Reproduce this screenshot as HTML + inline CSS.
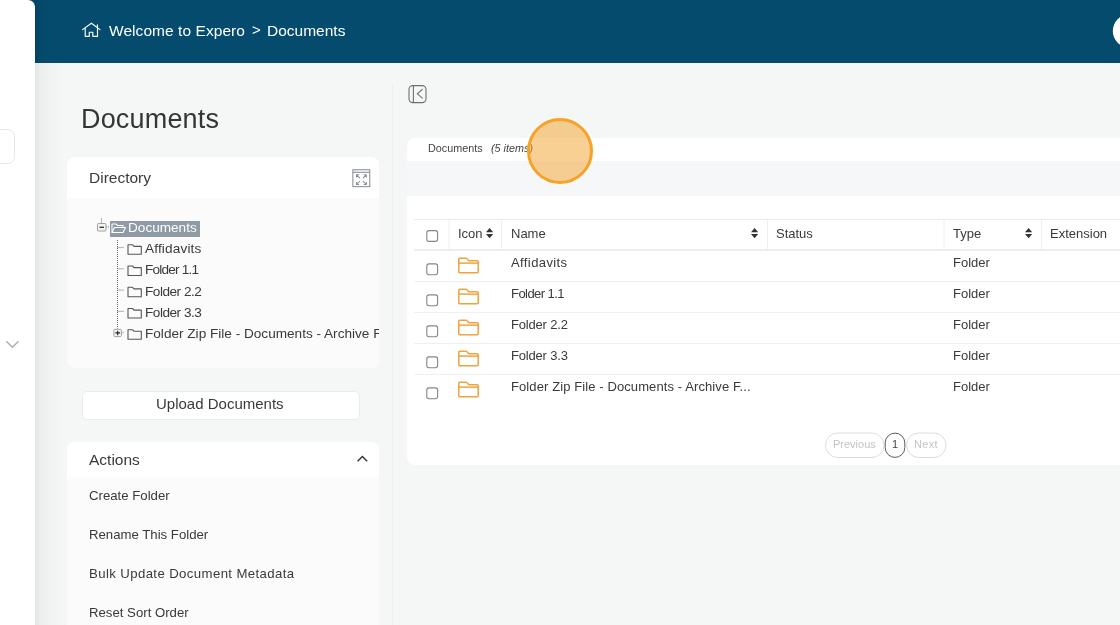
<!DOCTYPE html>
<html><head><meta charset="utf-8">
<style>
*{margin:0;padding:0;box-sizing:border-box}
html,body{width:1120px;height:625px;overflow:hidden;background:#fff;font-family:"Liberation Sans",sans-serif;color:#3a3a3a}
.a{position:absolute}
.t{position:absolute;line-height:1;white-space:nowrap;will-change:transform}
#hdr{left:0;top:0;width:1120px;height:63px;background:#044b6e}
#main{left:35px;top:63px;width:1085px;height:562px;background:#f5f7f7}
#shadow{left:35px;top:63px;width:30px;height:562px;background:linear-gradient(to right,#e4e4e4 0px,#eceeee 5px,#f1f3f3 14px,#f5f7f7 30px)}
#side{left:0;top:0;width:35px;height:625px;background:#fff;border-top-right-radius:7px}
.card{position:absolute;background:#fbfbfb;border-radius:8px;overflow:hidden}
.card .hd{position:absolute;left:0;top:0;right:0;background:#fff}
svg{position:absolute;overflow:visible}
</style></head><body>
<div class="a" id="hdr"></div>
<div class="a" id="main"></div>
<div class="a" id="shadow"></div>
<div class="a" style="left:35px;top:0;width:14px;height:63px;background:linear-gradient(to right,rgba(0,0,0,0.13),rgba(0,0,0,0.04) 5px,rgba(0,0,0,0) 14px)"></div>
<div class="a" id="side"></div>

<!-- header content -->
<svg style="left:0;top:0" width="1120" height="63">
  <g fill="none" stroke="#fff" stroke-width="1.15" stroke-linejoin="round" stroke-linecap="round">
    <path d="M82.6 29.6 L91.4 23.2 L100 29.6"/>
    <path d="M97.4 24.8 V27.2"/>
    <path d="M85.2 28.1 V36.3 H89.3 V32.2 H92.8 V36.3 H97.5 V28.1"/>
  </g>
  <circle cx="1129.3" cy="31" r="16.5" fill="#fff"/>
</svg>
<div class="t" style="left:109px;top:22.6px;font-size:15.5px;letter-spacing:0.06px;color:#fff">Welcome to Expero</div>
<div class="t" style="left:251.6px;top:21.9px;font-size:15px;color:#fff">&gt;</div>
<div class="t" style="left:266.5px;top:22.6px;font-size:15.5px;color:#fff">Documents</div>

<!-- left sidebar bits -->
<div class="a" style="left:-20px;top:129px;width:34.5px;height:35.4px;border:1px solid #e6e8ea;border-radius:7px;background:#fff"></div>
<svg style="left:0;top:0" width="35" height="625">
  <path d="M6.3 341.3 L12.4 347.2 L18.5 341.3" fill="none" stroke="#a7aeb2" stroke-width="1.4"/>
</svg>

<!-- title -->
<div class="t" style="left:81px;top:105.6px;font-size:27px;letter-spacing:0.18px;color:#353535">Documents</div>

<!-- directory card -->
<div class="card" style="left:67.4px;top:157px;width:311.6px;height:211.4px">
  <div class="hd" style="height:41px"></div>
</div>
<div class="t" style="left:89px;top:169.9px;font-size:15.5px;color:#3a3a3a">Directory</div>

<div class="card" style="left:81.8px;top:391.2px;width:278.4px;height:29.3px;background:#fff;border:1px solid #e9ebec;border-radius:5px"></div>
<div class="t" style="left:156px;top:396.3px;font-size:15px;color:#3a3a3a">Upload Documents</div>

<!-- actions card -->
<div class="card" style="left:67.4px;top:441.8px;width:311.6px;height:200px">
  <div class="hd" style="height:35.5px"></div>
</div>
<div class="t" style="left:89px;top:452px;font-size:15.5px">Actions</div>
<div class="t" style="left:89px;top:488.9px;font-size:13.2px">Create Folder</div>
<div class="t" style="left:89px;top:527.9px;font-size:13.2px">Rename This Folder</div>
<div class="t" style="left:89px;top:566.9px;font-size:13.2px;letter-spacing:0.39px">Bulk Update Document Metadata</div>
<div class="t" style="left:89px;top:605.9px;font-size:13.2px">Reset Sort Order</div>

<!-- divider -->
<div class="a" style="left:392px;top:84px;width:1px;height:541px;background:#eceef1"></div>

<!-- right panel card -->
<div class="card" style="left:407px;top:138px;width:760px;height:326.5px;background:#fff">
  <div class="a" style="left:0;top:22.5px;width:760px;height:35px;background:#f5f7f8"></div>
</div>
<div class="t" style="left:428px;top:143.3px;font-size:10.8px;color:#444">Documents</div>
<div class="t" style="left:490.5px;top:143.3px;font-size:10.8px;color:#444;font-style:italic">(5 items)</div>

<!-- table header -->
<div class="a" style="left:414px;top:219px;width:706px;height:1px;background:#e9ebed"></div>
<div class="a" style="left:414px;top:249.3px;width:706px;height:1.6px;background:#ebedef"></div>
<div class="t" style="left:458px;top:226.5px;font-size:13px">Icon</div>
<div class="t" style="left:511px;top:226.5px;font-size:13px">Name</div>
<div class="t" style="left:776px;top:226.5px;font-size:13px">Status</div>
<div class="t" style="left:953px;top:226.5px;font-size:13px">Type</div>
<div class="t" style="left:1050px;top:226.5px;font-size:13px">Extension</div>

<div class="t" style="left:511px;top:256px;font-size:13px;letter-spacing:0.4px">Affidavits</div>
<div class="t" style="left:511px;top:286.8px;font-size:13px;letter-spacing:-0.55px">Folder 1.1</div>
<div class="t" style="left:511px;top:317.6px;font-size:13px;letter-spacing:-0.18px">Folder 2.2</div>
<div class="t" style="left:511px;top:348.9px;font-size:13px;letter-spacing:-0.18px">Folder 3.3</div>
<div class="t" style="left:511px;top:379.7px;font-size:13px;letter-spacing:0.1px">Folder Zip File - Documents - Archive F...</div>
<div class="t" style="left:953px;top:256px;font-size:13px">Folder</div>
<div class="t" style="left:953px;top:286.8px;font-size:13px">Folder</div>
<div class="t" style="left:953px;top:317.6px;font-size:13px">Folder</div>
<div class="t" style="left:953px;top:348.9px;font-size:13px">Folder</div>
<div class="t" style="left:953px;top:379.7px;font-size:13px">Folder</div>

<!-- tree -->
<div class="a" style="left:110px;top:221px;width:90px;height:16px;background:#8e9aa4"></div>
<div class="t" style="left:128px;top:221px;font-size:13.6px;color:#fff">Documents</div>
<div class="t" style="left:144.8px;top:241.58px;font-size:13.6px;letter-spacing:0.16px;color:#3a3a3a">Affidavits</div>
<div class="t" style="left:144.8px;top:262.78px;font-size:13.6px;letter-spacing:-0.8px;color:#3a3a3a">Folder 1.1</div>
<div class="t" style="left:144.8px;top:284.6px;font-size:13.6px;letter-spacing:-0.49px;color:#3a3a3a">Folder 2.2</div>
<div class="t" style="left:144.8px;top:305.8px;font-size:13.6px;letter-spacing:-0.49px;color:#3a3a3a">Folder 3.3</div>
<div class="t" style="left:144.8px;top:322px;height:20px;width:233.5px;overflow:hidden;padding-top:5.1px;font-size:13.6px;color:#3a3a3a">Folder Zip File - Documents - Archive Folder</div>
<svg style="left:0;top:0" width="400" height="400">
<g fill="none" stroke="#6a6a6a" stroke-width="1" stroke-dasharray="1 1">
<path d="M101.5 218.5 V223"/><path d="M106 227 H110"/>
<path d="M117.5 240 V328.5"/>
<path d="M117.5 247.6 H124"/>
<path d="M117.5 268.8 H124"/>
<path d="M117.5 290.1 H124"/>
<path d="M117.5 311.3 H124"/>
<path d="M121.5 332.7 H124"/>
</g>
<rect x="97.5" y="223.5" width="8.5" height="7.5" rx="1" fill="#f4f4f4" stroke="#a0a0a0" stroke-width="1"/>
<path d="M99.5 227.3 H104" stroke="#333" stroke-width="1.3"/>
<g fill="none" stroke="#fff" stroke-width="1.1" stroke-linejoin="round"><path d="M112 232.5 V224 H116 L117.5 225.5 H123 V227.5"/><path d="M112 232.5 L114.5 227.5 H125.5 L123 232.5 Z"/></g>
<path d="M128 254.3 V244.8 H132.5 L134 246.4 H141.3 V254.3 Z" fill="none" stroke="#555" stroke-width="1.1" stroke-linejoin="round"/>
<path d="M128 275.5 V266.0 H132.5 L134 267.6 H141.3 V275.5 Z" fill="none" stroke="#555" stroke-width="1.1" stroke-linejoin="round"/>
<path d="M128 296.8 V287.3 H132.5 L134 288.9 H141.3 V296.8 Z" fill="none" stroke="#555" stroke-width="1.1" stroke-linejoin="round"/>
<path d="M128 318.0 V308.5 H132.5 L134 310.1 H141.3 V318.0 Z" fill="none" stroke="#555" stroke-width="1.1" stroke-linejoin="round"/>
<path d="M128 339.2 V329.7 H132.5 L134 331.3 H141.3 V339.2 Z" fill="none" stroke="#555" stroke-width="1.1" stroke-linejoin="round"/>
<rect x="113.9" y="329.3" width="7.5" height="7.3" rx="1" fill="#f4f4f4" stroke="#a0a0a0" stroke-width="1"/>
<path d="M115.4 332.9 H120 M117.7 330.7 V335.2" stroke="#222" stroke-width="1.1"/>
</svg>
<!-- table -->
<svg style="left:0;top:0" width="1120" height="625">
<path d="M414 281.5 H1120" stroke="#eef0f1" stroke-width="1"/>
<path d="M414 312.5 H1120" stroke="#eef0f1" stroke-width="1"/>
<path d="M414 343.5 H1120" stroke="#eef0f1" stroke-width="1"/>
<path d="M414 374.5 H1120" stroke="#eef0f1" stroke-width="1"/>
<path d="M449.0 220 V249" stroke="#eceef0" stroke-width="1"/>
<path d="M501.5 220 V249" stroke="#eceef0" stroke-width="1"/>
<path d="M767.5 220 V249" stroke="#eceef0" stroke-width="1"/>
<path d="M944.0 220 V249" stroke="#eceef0" stroke-width="1"/>
<path d="M1041.5 220 V249" stroke="#eceef0" stroke-width="1"/>
<rect x="426.8" y="230.6" width="10.8" height="10.8" rx="2.2" fill="#fff" stroke="#858585" stroke-width="1.1"/>
<rect x="426.8" y="263.9" width="10.8" height="10.8" rx="2.2" fill="#fff" stroke="#858585" stroke-width="1.1"/>
<rect x="426.8" y="294.9" width="10.8" height="10.8" rx="2.2" fill="#fff" stroke="#858585" stroke-width="1.1"/>
<rect x="426.8" y="325.9" width="10.8" height="10.8" rx="2.2" fill="#fff" stroke="#858585" stroke-width="1.1"/>
<rect x="426.8" y="356.9" width="10.8" height="10.8" rx="2.2" fill="#fff" stroke="#858585" stroke-width="1.1"/>
<rect x="426.8" y="387.9" width="10.8" height="10.8" rx="2.2" fill="#fff" stroke="#858585" stroke-width="1.1"/>
<g transform="translate(458,257.4)" fill="none" stroke="#f0a23c" stroke-width="1.5" stroke-linejoin="round"><path d="M0.8 14.3 V1.8 Q0.8 0.8 1.8 0.8 H8 Q8.6 0.8 9 1.3 L10.6 3 Q11 3.4 11.6 3.4 H19.2 Q20.2 3.4 20.2 4.4 V14.3 Q20.2 15.3 19.2 15.3 H1.8 Q0.8 15.3 0.8 14.3 Z"/><path d="M0.8 5.7 H20.2"/></g>
<g transform="translate(458,288.4)" fill="none" stroke="#f0a23c" stroke-width="1.5" stroke-linejoin="round"><path d="M0.8 14.3 V1.8 Q0.8 0.8 1.8 0.8 H8 Q8.6 0.8 9 1.3 L10.6 3 Q11 3.4 11.6 3.4 H19.2 Q20.2 3.4 20.2 4.4 V14.3 Q20.2 15.3 19.2 15.3 H1.8 Q0.8 15.3 0.8 14.3 Z"/><path d="M0.8 5.7 H20.2"/></g>
<g transform="translate(458,319.4)" fill="none" stroke="#f0a23c" stroke-width="1.5" stroke-linejoin="round"><path d="M0.8 14.3 V1.8 Q0.8 0.8 1.8 0.8 H8 Q8.6 0.8 9 1.3 L10.6 3 Q11 3.4 11.6 3.4 H19.2 Q20.2 3.4 20.2 4.4 V14.3 Q20.2 15.3 19.2 15.3 H1.8 Q0.8 15.3 0.8 14.3 Z"/><path d="M0.8 5.7 H20.2"/></g>
<g transform="translate(458,350.4)" fill="none" stroke="#f0a23c" stroke-width="1.5" stroke-linejoin="round"><path d="M0.8 14.3 V1.8 Q0.8 0.8 1.8 0.8 H8 Q8.6 0.8 9 1.3 L10.6 3 Q11 3.4 11.6 3.4 H19.2 Q20.2 3.4 20.2 4.4 V14.3 Q20.2 15.3 19.2 15.3 H1.8 Q0.8 15.3 0.8 14.3 Z"/><path d="M0.8 5.7 H20.2"/></g>
<g transform="translate(458,381.4)" fill="none" stroke="#f0a23c" stroke-width="1.5" stroke-linejoin="round"><path d="M0.8 14.3 V1.8 Q0.8 0.8 1.8 0.8 H8 Q8.6 0.8 9 1.3 L10.6 3 Q11 3.4 11.6 3.4 H19.2 Q20.2 3.4 20.2 4.4 V14.3 Q20.2 15.3 19.2 15.3 H1.8 Q0.8 15.3 0.8 14.3 Z"/><path d="M0.8 5.7 H20.2"/></g>
<g transform="translate(486.0,228)" fill="#333"><path d="M0 4.3 L3.6 0 L7.2 4.3 Z"/><path d="M0 5.9 L3.6 10.2 L7.2 5.9 Z"/></g>
<g transform="translate(751.0,228)" fill="#333"><path d="M0 4.3 L3.6 0 L7.2 4.3 Z"/><path d="M0 5.9 L3.6 10.2 L7.2 5.9 Z"/></g>
<g transform="translate(1025.0,228)" fill="#333"><path d="M0 4.3 L3.6 0 L7.2 4.3 Z"/><path d="M0 5.9 L3.6 10.2 L7.2 5.9 Z"/></g>
</svg>
<!-- icons -->
<svg style="left:0;top:0" width="1120" height="625">
  <!-- expand icon -->
  <g transform="translate(352.3,169.2)" fill="none" stroke="#8a8f94" stroke-width="1.05">
    <rect x="0.55" y="0.55" width="16.9" height="16.9"/>
    <path d="M0.55 3.1 H17.45"/>
    <path d="M1.2 1.9 H5.5" stroke="#d0d3d5" stroke-width="1"/>
    <path d="M7.6 9 L4.2 5.6 M4.2 8.2 V5.6 H6.8"/>
    <path d="M10.6 9 L14 5.6 M14 8.2 V5.6 H11.4"/>
    <path d="M7.6 11.9 L4.2 15.3 M4.2 12.7 V15.3 H6.8"/>
    <path d="M10.6 11.9 L14 15.3 M14 12.7 V15.3 H11.4"/>
  </g>
  <!-- collapse icon -->
  <g transform="translate(408.4,85)" fill="none" stroke="#6e6e6e" stroke-width="1.1">
    <rect x="0.6" y="0.6" width="17" height="17" rx="3.8"/>
    <path d="M5 0.6 V17.6"/>
    <path d="M14.3 4.1 L8.9 8.8 L14.3 13.4"/>
  </g>
  <!-- actions chevron -->
  <path d="M357.6 461.3 L362.4 456.5 L367.2 461.3" fill="none" stroke="#333" stroke-width="1.4"/>
  <!-- pagination -->
  <rect x="825.5" y="433" width="58.5" height="24.5" rx="12.2" fill="#fff" stroke="#dcdcdc" stroke-width="1"/>
  <rect x="906.5" y="433" width="39.5" height="24.5" rx="12.2" fill="#fff" stroke="#dcdcdc" stroke-width="1"/>
  <rect x="885.2" y="433.1" width="19.6" height="24.3" rx="9.8" fill="#fff" stroke="#5c5c5c" stroke-width="1"/>
</svg>
<div class="t" style="left:833px;top:439.1px;font-size:11px;color:#c4c4c4">Previous</div>
<div class="t" style="left:891.7px;top:439.1px;font-size:11px;color:#444">1</div>
<div class="t" style="left:913.5px;top:439.1px;font-size:11px;letter-spacing:0.35px;color:#c4c4c4">Next</div>

<!-- orange circle -->
<div class="a" style="left:527px;top:118px;width:66px;height:66px;border-radius:50%;border:3px solid #f6a224;background:rgba(244,170,60,0.55)"></div>
</body></html>
